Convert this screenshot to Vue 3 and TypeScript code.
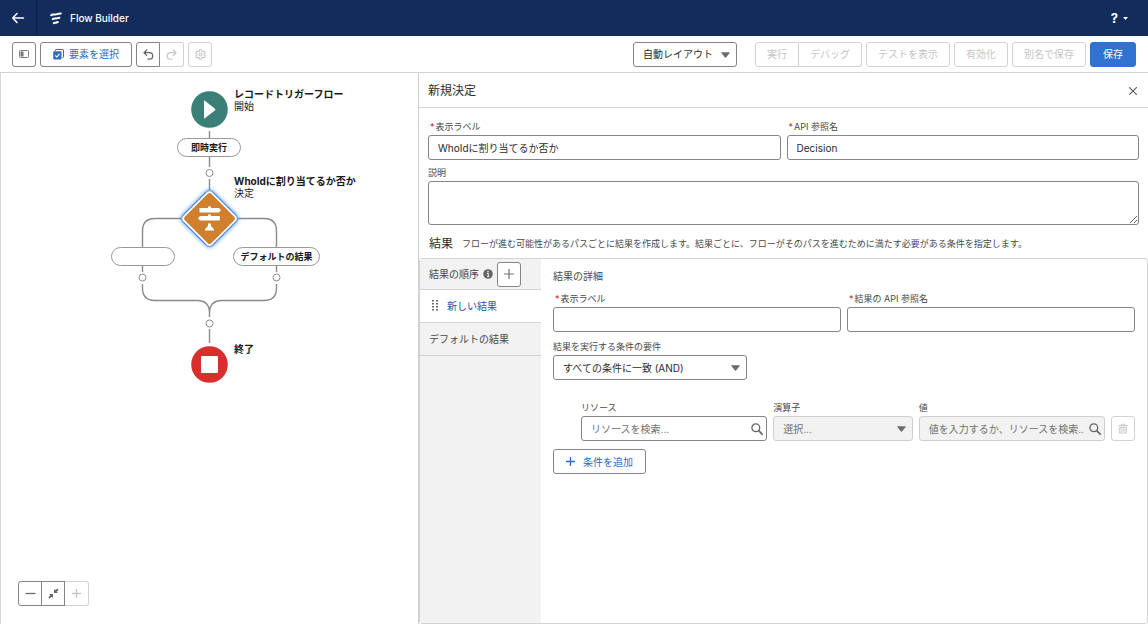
<script setup lang="ts">
import { ref } from 'vue'

interface ToolAction {
  label: string
  group: 'first' | 'last' | 'single'
}

const actions: ToolAction[] = [
  { label: '実行', group: 'first' },
  { label: 'デバッグ', group: 'last' },
  { label: 'テストを表示', group: 'single' },
  { label: '有効化', group: 'single' },
  { label: '別名で保存', group: 'single' },
]

const label = ref<string>('WhoIdに割り当てるか否か')
const apiName = ref<string>('Decision')
const description = ref<string>('')
const outcomeLabel = ref<string>('')
const outcomeApi = ref<string>('')
const resource = ref<string>('')
</script>

<template>
  <div class="app">
    <header class="topbar">
      <button class="back" type="button" aria-label="戻る">
        <svg width="14" height="12" viewBox="0 0 14 12"><path d="M6 1.5 1.7 6 6 10.5M2 6h10.5" fill="none" stroke="#fff" stroke-width="1.5" stroke-linecap="round" stroke-linejoin="round" /></svg>
      </button>
      <svg class="brand" width="12" height="13" viewBox="0 0 12 13" fill="none" stroke="#fff" stroke-linecap="round" stroke-width="2">
        <path d="M1.200 3.200C2.800 1.600 4 3.200 6.200 2.400S9 1.400 10.800 1.400" />
        <path d="M2.800 7.200C4 5.800 4.800 7 6.500 6.400S8.200 5.700 9.400 5.700" />
        <path d="M3.800 11.200C4.600 10.300 5.200 11 6.300 10.600S7.200 10.100 7.800 10.100" />
      </svg>
      <h1 class="title">Flow Builder</h1>
      <button class="help" type="button" aria-label="ヘルプ">
        <span>?</span>
        <svg width="5" height="3" viewBox="0 0 5 3"><path d="M0 0h5L2.500 3z" fill="#fff" /></svg>
      </button>
    </header>

    <div class="toolbar">
      <button class="btn icon" type="button" aria-label="ツールボックスを切り替え">
        <svg width="10" height="8" viewBox="0 0 10 8"><rect x=".5" y=".5" width="9" height="7" rx=".8" fill="none" stroke="#808080" /><rect x="1.500" y="1.500" width="3" height="5" fill="#747474" /></svg>
      </button>
      <button class="btn pick" type="button">
        <svg width="11" height="11" viewBox="0 0 11 11"><path d="M2.500 2V1.200Q2.500.5 3.200.5H9.800Q10.500.5 10.500 1.200V7.800Q10.500 8.500 9.800 8.500H9.300" fill="none" stroke="#2b6cc9" /><rect x=".2" y="2.200" width="8.300" height="8.300" rx="1" fill="#2b6cc9" /><path d="m2.300 6.500 1.500 1.500L6.600 4.900" fill="none" stroke="#fff" stroke-width="1.100" /></svg>
        要素を選択
      </button>
      <div class="joined">
        <button class="btn icon first" type="button" aria-label="元に戻す">
          <svg width="11" height="11" viewBox="0 0 11 11"><path d="M3.700 1 1 3.700 3.700 6.400M1.200 3.700H6.500A3.200 3.200 0 0 1 6.500 10.100H5" fill="none" stroke="#666" stroke-width="1.300" stroke-linecap="round" stroke-linejoin="round" /></svg>
        </button>
        <button class="btn icon last" type="button" aria-label="やり直し" disabled>
          <svg width="11" height="11" viewBox="0 0 11 11"><path d="M7.300 1 10 3.700 7.300 6.400M9.800 3.700H4.500A3.200 3.200 0 0 0 4.500 10.100H6" fill="none" stroke="#c9c9c9" stroke-width="1.300" stroke-linecap="round" stroke-linejoin="round" /></svg>
        </button>
      </div>
      <button class="btn icon" type="button" aria-label="設定" disabled>
        <svg width="11" height="11" viewBox="0 0 22 22" fill="none" stroke="#c4c4c4" stroke-width="2.200" stroke-linejoin="round"><path d="M9 1.500h4l.8 3 1.800 1 3-.9 2 3.500-2.200 2.100v1.600l2.200 2.100-2 3.500-3-.9-1.800 1-.8 3H9l-.8-3-1.800-1-3 .9-2-3.500 2.200-2.100v-1.600L1.400 8.100l2-3.500 3 .9 1.800-1z" /><circle cx="11" cy="11" r="3" /></svg>
      </button>
      <div class="select layout">
        <select aria-label="レイアウト"><option>自動レイアウト</option></select>
        <svg class="caret" width="9" height="6" viewBox="0 0 9 6"><path d="M.6.3h7.800Q9 .4 8.600 1L5 5.500q-.5.500-1 0L.4 1Q0 .4.600.3z" fill="#6b6b6b" /></svg>
      </div>
      <div class="actions">
        <button v-for="a in actions" :key="a.label" class="btn text" :class="a.group" type="button" disabled>{{ a.label }}</button>
        <button class="btn save" type="button">保存</button>
      </div>
    </div>

    <div class="workspace">
      <main class="canvas">
        <svg class="links" width="400" height="320" viewBox="0 73 400 320" fill="none" stroke="#8b8b8b" stroke-width="1.400">
          <path d="M209.500 131V138M209.500 157V167M209.500 179V190" />
          <path d="M182 218.500H155Q142.500 218.500 142.500 231V247M237 218.500H264Q276.500 218.500 276.500 231V247" />
          <path d="M142.500 266V272M276.500 266V272" />
          <path d="M142.500 284V288Q142.500 300.500 155 300.500H197Q209.500 300.500 209.500 313V317M276.500 284V288Q276.500 300.500 264 300.500H222Q209.500 300.500 209.500 313" />
          <path d="M209.500 329V343" />
          <g stroke-width="1" fill="#fff"><circle cx="209.500" cy="173" r="3.500" /><circle cx="142.500" cy="277.500" r="3.500" /><circle cx="276.500" cy="277.500" r="3.500" /><circle cx="209.500" cy="323.500" r="3.500" /></g>
        </svg>
        <button class="node start" type="button" aria-label="開始">
          <svg width="37" height="37" viewBox="0 0 37 37"><circle cx="18.500" cy="18.500" r="18.300" fill="#3a8077" /><path d="M13 10v17q0 1 .9.300L24 19.300q.8-.8 0-1.600L13.900 9.700Q13 9 13 10z" fill="#fff" /></svg>
        </button>
        <div class="caption start-cap"><strong>レコードトリガーフロー</strong><span>開始</span></div>
        <span class="pill run">即時実行</span>
        <button class="node decision" type="button" aria-label="決定">
          <svg width="69" height="69" viewBox="0 0 69 69">
            <rect class="glow" x="13.500" y="13.500" width="42" height="42" rx="4" transform="rotate(45 34.500 34.500)" fill="#fff" stroke="#2f78dc" />
            <rect x="15.800" y="15.800" width="37.400" height="37.400" rx="2.500" transform="rotate(45 34.500 34.500)" fill="#d07f2c" />
            <path d="M33 22.500h3V24h8l2 2.200-2 2.300H24.500V24H33zM25 32h8v-1.500h3V32h8.800v4.500H25L23 34.300zM33 39.500h3V42l3 3.300v1.200h-9v-1.200L33 42z" fill="#fff" />
          </svg>
        </button>
        <div class="caption decision-cap"><strong>WhoIdに割り当てるか否か</strong><span>決定</span></div>
        <span class="pill outcome"></span>
        <span class="pill fallback">デフォルトの結果</span>
        <button class="node end" type="button" aria-label="終了">
          <svg width="37" height="37" viewBox="0 0 37 37"><circle cx="18.500" cy="18.500" r="18.300" fill="#d92d2e" /><rect x="10" y="10" width="17" height="17" rx="1" fill="#fff" /></svg>
        </button>
        <div class="caption end-cap"><strong>終了</strong></div>
        <div class="zoom joined">
          <button class="btn icon first" type="button" aria-label="縮小"><svg width="11" height="11" viewBox="0 0 11 11"><path d="M.5 5.500h10" stroke="#6f6f6f" stroke-width="1.300" /></svg></button>
          <button class="btn icon mid" type="button" aria-label="全体を表示"><svg width="11" height="11" viewBox="0 0 11 11"><path d="M6 1v4h4L8.700 3.800 10.600 1.700 9.400.5 7.300 2.300zM5 10V6H1l1.300 1.200L.4 9.300l1.200 1.200 2.100-1.800z" fill="#666" /></svg></button>
          <button class="btn icon last" type="button" aria-label="拡大" disabled><svg width="11" height="11" viewBox="0 0 11 11"><path d="M1 5.500h9M5.500 1v9" stroke="#c6c6c6" stroke-width="1.300" /></svg></button>
        </div>
      </main>

      <aside class="panel">
        <div class="panel-head">
          <h2>新規決定</h2>
          <button class="close" type="button" aria-label="閉じる"><svg width="8" height="8" viewBox="0 0 8 8"><path d="m.6.6 6.800 6.800M7.400.6.600 7.400" stroke="#5f5f5f" stroke-width="1.200" stroke-linecap="round" /></svg></button>
        </div>
        <form class="general" @submit.prevent>
          <div class="pair">
            <div class="field"><label for="label"><abbr>*</abbr>表示ラベル</label><input id="label" v-model="label" type="text" /></div>
            <div class="field"><label for="api"><abbr>*</abbr>API 参照名</label><input id="api" v-model="apiName" type="text" /></div>
          </div>
          <div class="field"><label for="desc">説明</label><textarea id="desc" v-model="description"></textarea></div>
        </form>
        <div class="intro"><h3>結果</h3><p>フローが進む可能性があるパスごとに結果を作成します。結果ごとに、フローがそのパスを進むために満たす必要がある条件を指定します。</p></div>
        <section class="outcomes">
          <nav class="order">
            <div class="order-head">
              <h4>結果の順序</h4>
              <svg width="10" height="10" viewBox="0 0 10 10"><circle cx="5" cy="5" r="4.800" fill="#666" /><circle cx="5" cy="2.800" r=".8" fill="#fff" /><path d="M4 4.500h1.300v3M4 7.400h2.200" fill="none" stroke="#fff" stroke-width=".9" /></svg>
              <button class="btn icon" type="button" aria-label="結果を追加"><svg width="10" height="10" viewBox="0 0 10 10"><path d="M0 5h10M5 0v10" stroke="#747474" stroke-width="1.200" /></svg></button>
            </div>
            <a class="item active" href="#outcome"><svg width="6" height="12" viewBox="0 0 6 12" fill="#666"><path d="M0 0h2v1.500H0zM4 0h2v1.500H4zM0 3h2v1.500H0zM4 3h2v1.500H4zM0 6h2v1.500H0zM4 6h2v1.500H4zM0 9h2v1.500H0zM4 9h2v1.500H4z" /></svg>新しい結果</a>
            <a class="item" href="#default">デフォルトの結果</a>
          </nav>
          <form id="outcome" class="detail" @submit.prevent>
            <h4>結果の詳細</h4>
            <div class="pair">
              <div class="field"><label for="o-label"><abbr>*</abbr>表示ラベル</label><input id="o-label" v-model="outcomeLabel" type="text" /></div>
              <div class="field"><label for="o-api"><abbr>*</abbr>結果の API 参照名</label><input id="o-api" v-model="outcomeApi" type="text" /></div>
            </div>
            <div class="field logic">
              <label for="logic">結果を実行する条件の要件</label>
              <div class="select">
                <select id="logic"><option>すべての条件に一致 (AND)</option></select>
                <svg class="caret" width="9" height="6" viewBox="0 0 9 6"><path d="M.6.3h7.800Q9 .4 8.600 1L5 5.500q-.5.500-1 0L.4 1Q0 .4.600.3z" fill="#6b6b6b" /></svg>
              </div>
            </div>
            <div class="condition">
              <div class="field wide">
                <label for="res">リソース</label>
                <div class="lookup">
                  <input id="res" v-model="resource" type="text" placeholder="リソースを検索..." />
                  <svg class="lens" width="12" height="12" viewBox="0 0 12 12" fill="none" stroke="#666"><circle cx="4.800" cy="4.800" r="3.900" stroke-width="1.300" /><path d="m7.700 7.700 3.400 3.400" stroke-width="1.700" stroke-linecap="round" /></svg>
                </div>
              </div>
              <div class="field narrow">
                <label for="op">演算子</label>
                <div class="select">
                  <select id="op" disabled><option>選択...</option></select>
                  <svg class="caret" width="9" height="6" viewBox="0 0 9 6"><path d="M.6.3h7.800Q9 .4 8.600 1L5 5.500q-.5.500-1 0L.4 1Q0 .4.600.3z" fill="#6b6b6b" /></svg>
                </div>
              </div>
              <div class="field wide">
                <label for="val">値</label>
                <div class="lookup">
                  <input id="val" type="text" placeholder="値を入力するか、リソースを検索..." disabled />
                  <svg class="lens" width="12" height="12" viewBox="0 0 12 12" fill="none" stroke="#666"><circle cx="4.800" cy="4.800" r="3.900" stroke-width="1.300" /><path d="m7.700 7.700 3.400 3.400" stroke-width="1.700" stroke-linecap="round" /></svg>
                </div>
              </div>
              <button class="btn icon" type="button" aria-label="条件を削除" disabled>
                <svg width="10" height="11" viewBox="0 0 10 11"><path d="M3 2V.8h4V2h2.500v1.300H.5V2zM4 2h2v-.4H4z" fill="#c9c9c9" /><path d="M1.800 4.600h6.400V10H1.800zM4 6v2.700M6 6v2.700" fill="none" stroke="#c9c9c9" stroke-width="1.200" /></svg>
              </button>
            </div>
            <button class="btn add" type="button"><svg width="9" height="9" viewBox="0 0 9 9"><path d="M0 4.500h9M4.500 0v9" stroke="#2b6cc9" stroke-width="1.300" /></svg>条件を追加</button>
          </form>
        </section>
      </aside>
    </div>
  </div>
</template>

<style>
body {
  margin: 0;
}
</style>

<style scoped>
.app {
  display: flex;
  flex-direction: column;
  min-height: 100vh;
  background: #fff;
  color: #2b2b2b;
  font-family: Inter, "Noto Sans CJK JP", sans-serif;
  font-size: 10px;
  line-height: 12px;
}
.app *,
.app *::before {
  box-sizing: border-box;
}
svg {
  display: block;
  flex: none;
}
h1, h2, h3, h4, p {
  margin: 0;
  font-weight: 400;
}
button, input, select, textarea {
  margin: 0;
  font: inherit;
  color: inherit;
}
.topbar {
  display: flex;
  align-items: center;
  height: 36px;
  background: #132c5c;
  color: #fff;
}
.back {
  display: flex;
  align-items: center;
  justify-content: center;
  width: 37px;
  height: 36px;
  padding: 0;
  border: 0;
  border-right: 1px solid #0b1e48;
  background: none;
}
.brand {
  margin: 0 8px 0 13px;
}
.title {
  font-size: 10px;
  font-weight: 500;
}
.help {
  display: flex;
  align-items: center;
  gap: 5px;
  margin-left: auto;
  margin-right: 20px;
  padding: 0;
  border: 0;
  background: none;
  font-size: 13px;
  font-weight: 700;
}
.toolbar {
  display: flex;
  align-items: center;
  height: 37px;
  padding: 0 12px;
  gap: 4px;
  border-bottom: 1px solid #d3d3d3;
}
.btn {
  display: flex;
  align-items: center;
  justify-content: center;
  height: 25px;
  padding: 0 12px;
  border: 1px solid #858585;
  border-radius: 3px;
  background: #fff;
  white-space: nowrap;
}
.btn:disabled {
  border-color: #d2d2d2;
  color: #c4c4c4;
}
.btn.icon {
  flex: none;
  width: 24px;
  padding: 0;
}
.btn.pick {
  gap: 5px;
  color: #2b6cc9;
}
.btn.text {
  padding: 0 11px;
}
.joined {
  display: flex;
}
.btn.first {
  border-radius: 3px 0 0 3px;
}
.btn.mid {
  margin-left: -1px;
  border-radius: 0;
}
.btn.last {
  border-left: 0;
  border-radius: 0 3px 3px 0;
}
.select {
  position: relative;
}
.select select {
  display: block;
  width: 100%;
  height: 25px;
  padding: 0 24px 0 9px;
  border: 1px solid #858585;
  border-radius: 3px;
  background: #fff;
  appearance: none;
}
.select select:disabled {
  border-color: #cfcfcf;
  background: #f2f2f2;
  color: #707070;
  opacity: 1;
}
.caret {
  position: absolute;
  top: 10px;
  right: 7px;
  pointer-events: none;
}
.layout {
  width: 104px;
  margin-left: auto;
}
.actions {
  display: flex;
  margin-left: 14px;
}
.btn.single,
.btn.save {
  margin-left: 4px;
}
.btn.save {
  border-color: #2f72cf;
  background: #2f72cf;
  color: #fff;
}
.workspace {
  display: flex;
  flex: 1;
}
.canvas {
  position: relative;
  flex: 0 0 418px;
  border-left: 1px solid #d8d8d8;
}
.links {
  position: absolute;
  top: 0;
  left: -1px;
}
.node {
  position: absolute;
  padding: 0;
  border: 0;
  background: none;
}
.start {
  top: 18px;
  left: 190px;
}
.decision {
  top: 111px;
  left: 174px;
}
.end {
  top: 273px;
  left: 190px;
}
.glow {
  filter: drop-shadow(0 0 2px #4b8ff0);
}
.caption {
  position: absolute;
  left: 233px;
  display: flex;
  flex-direction: column;
  color: #181818;
  white-space: nowrap;
}
.caption strong {
  font-weight: 700;
}
.start-cap {
  top: 15px;
}
.decision-cap {
  top: 102px;
}
.end-cap {
  top: 270px;
}
.pill {
  position: absolute;
  display: flex;
  align-items: center;
  justify-content: center;
  height: 19px;
  border: 1px solid #999;
  border-radius: 10px;
  background: #fff;
  color: #181818;
  font-size: 9px;
  font-weight: 700;
  white-space: nowrap;
}
.run {
  top: 65px;
  left: 176px;
  width: 64px;
}
.outcome {
  top: 174px;
  left: 110px;
  width: 64px;
}
.fallback {
  top: 174px;
  left: 232px;
  width: 87px;
}
.zoom {
  position: absolute;
  bottom: 18px;
  left: 17px;
}
.panel {
  display: flex;
  flex: 1;
  flex-direction: column;
  min-width: 0;
  border-left: 1px solid #cfcfcf;
}
.panel-head {
  display: flex;
  align-items: center;
  justify-content: space-between;
  height: 35px;
  padding: 1px 11px 0 9px;
  border-bottom: 1px solid #d3d3d3;
}
.panel-head h2 {
  font-size: 12px;
}
.close {
  padding: 0;
  border: 0;
  background: none;
}
.general {
  display: flex;
  flex-direction: column;
  gap: 6px;
  padding: 12px 9px 0;
}
.pair {
  display: grid;
  grid-template-columns: 1fr 1fr;
  gap: 6px;
}
.field {
  display: flex;
  flex-direction: column;
  gap: 2px;
  min-width: 0;
}
.field label {
  height: 13px;
  color: #484848;
  font-size: 9px;
  line-height: 13px;
  white-space: nowrap;
}
abbr {
  padding: 0 1px 0 2px;
  color: #c01818;
}
.field input,
.field textarea {
  display: block;
  width: 100%;
  height: 25px;
  padding: 0 9px;
  border: 1px solid #858585;
  border-radius: 3px;
  background: #fff;
}
.field textarea {
  height: 44px;
  padding: 5px 9px;
}
.intro {
  display: flex;
  align-items: center;
  gap: 9px;
  height: 33px;
  padding: 4px 10px 0;
}
.intro h3 {
  flex: none;
  font-size: 12px;
}
.intro p {
  color: #484848;
  font-size: 9px;
}
.outcomes {
  display: flex;
  flex: 1;
  border: 1px solid #d3d3d3;
  border-radius: 3px;
}
.order {
  flex: 0 0 121px;
  background: #f2f2f2;
}
.order-head {
  display: flex;
  align-items: center;
  gap: 4px;
  height: 31px;
  padding-left: 9px;
  border-bottom: 1px solid #d3d3d3;
  color: #484848;
}
.item {
  display: flex;
  align-items: center;
  height: 33px;
  padding-left: 9px;
  border-bottom: 1px solid #d3d3d3;
  color: #484848;
  text-decoration: none;
}
.item.active {
  gap: 9px;
  padding-left: 12px;
  background: #fff;
  color: #2456a6;
}
.detail {
  flex: 1;
  min-width: 0;
  padding: 11px 12px;
}
.detail h4 {
  height: 22px;
  color: #484848;
}
.logic {
  width: 194px;
  margin-top: 8px;
}
.condition {
  display: flex;
  align-items: flex-end;
  gap: 6px;
  margin: 21px 0 8px 28px;
}
.wide {
  flex: 4 1 0;
}
.narrow {
  flex: 3 1 0;
}
.lookup {
  position: relative;
}
.field .lookup input {
  padding-right: 20px;
}
.field input:disabled {
  border-color: #cfcfcf;
  background: #f2f2f2;
}
input::placeholder {
  color: #707070;
  opacity: 1;
}
.lens {
  position: absolute;
  top: 7px;
  right: 4px;
  pointer-events: none;
}
.btn.add {
  gap: 8px;
  color: #2b6cc9;
}
</style>
